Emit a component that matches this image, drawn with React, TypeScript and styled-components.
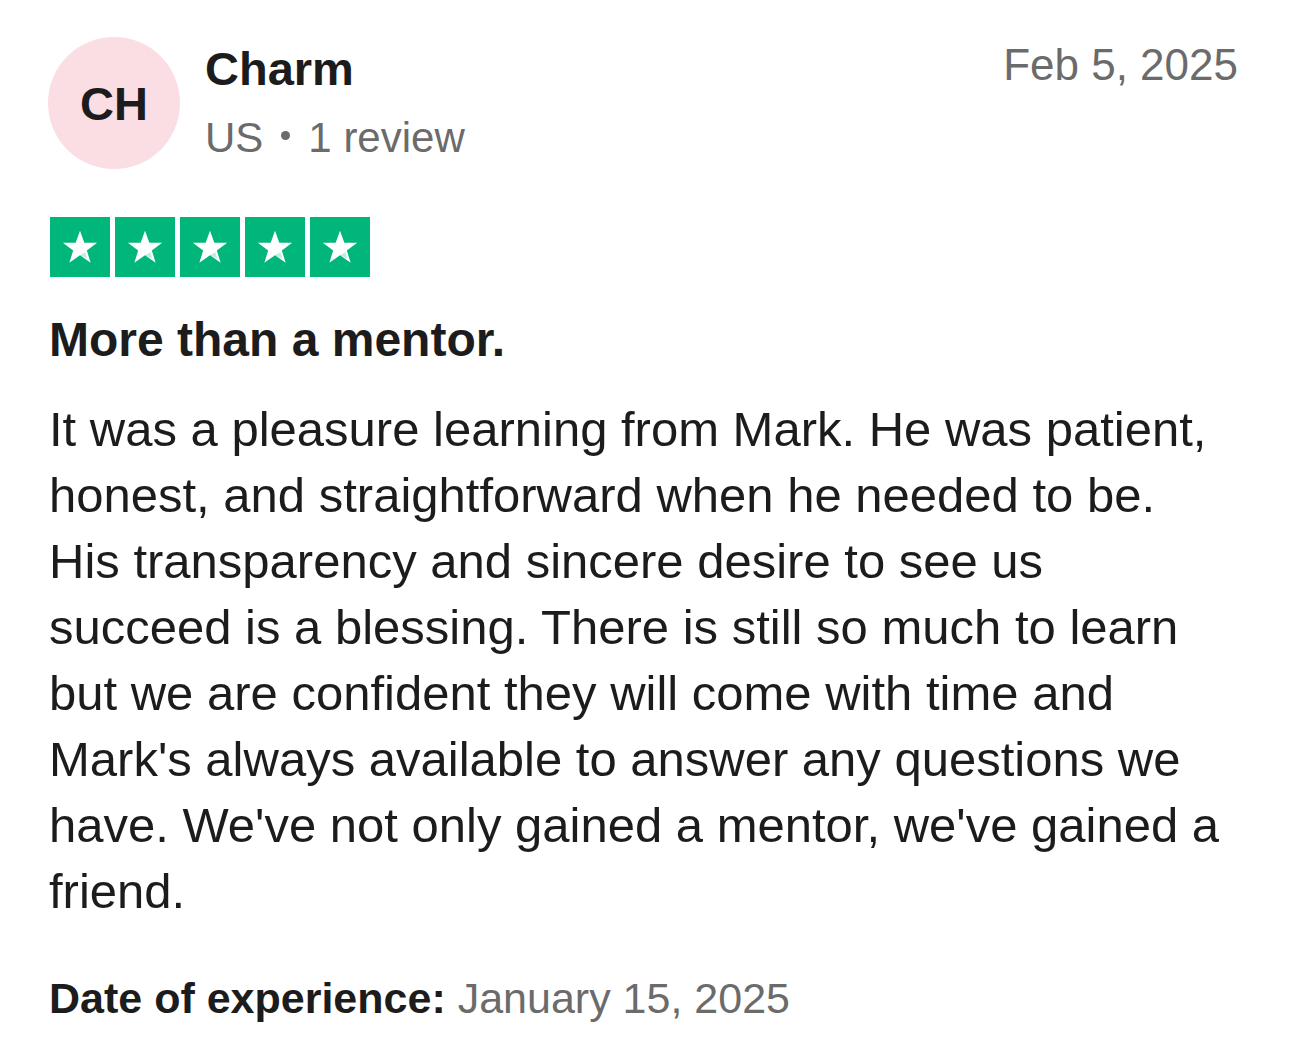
import styled, { createGlobalStyle } from 'styled-components';

const GlobalStyle = createGlobalStyle`
  body {
    margin: 0;
    background: #ffffff;
    font-family: 'Liberation Sans', Arial, Helvetica, sans-serif;
    color: #1c1c1c;
  }
`;

export default function App() {
  return (
    <>
      <GlobalStyle />
      <StyledReviewCard>
        <StyledHeader>
          <StyledConsumer>
            <StyledAvatar>CH</StyledAvatar>
            <StyledConsumerInfo>
              <span className="name">Charm</span>
              <span className="meta">
                US <StyledDot /> 1 review
              </span>
            </StyledConsumerInfo>
          </StyledConsumer>
          <StyledPostedDate>Feb 5, 2025</StyledPostedDate>
        </StyledHeader>

        <StyledStars aria-label="Rated 5 out of 5 stars">
          {[0, 1, 2, 3, 4].map((i) => (
            <StyledStarBox key={i}>
              <svg viewBox="0 0 24 24" width="40" height="40">
                <path
                  d="M12 2.2l2.6 7.3h7.7l-6.2 4.6 2.3 7.4L12 16.9l-6.4 4.6 2.3-7.4-6.2-4.6h7.7z"
                  fill="#ffffff"
                />
                <path d="M15.2 15.1l1.2 3.9L12 16.9z" fill="#00b67a" opacity="0.25" />
              </svg>
            </StyledStarBox>
          ))}
        </StyledStars>

        <StyledTitle>More than a mentor.</StyledTitle>
        <StyledBody>
          It was a pleasure learning from Mark. He was patient, honest, and
          straightforward when he needed to be. His transparency and sincere
          desire to see us succeed is a blessing. There is still so much to
          learn but we are confident they will come with time and Mark's always
          available to answer any questions we have. We've not only gained a
          mentor, we've gained a friend.
        </StyledBody>

        <StyledExperience>
          <strong>Date of experience:</strong> January 15, 2025
        </StyledExperience>
      </StyledReviewCard>
    </>
  );
}

const StyledReviewCard = styled.article`
  padding: 37px 52px 0 49px;
  width: 1290px;
  box-sizing: border-box;
`;

const StyledHeader = styled.header`
  display: flex;
  justify-content: space-between;
  align-items: flex-start;
`;

const StyledConsumer = styled.div`
  display: flex;
  align-items: center;
  gap: 25px;
`;

const StyledAvatar = styled.div`
  width: 132px;
  height: 132px;
  margin-left: -1px;
  border-radius: 50%;
  background: #fbdde4;
  display: flex;
  align-items: center;
  justify-content: center;
  font-size: 47px;
  font-weight: 700;
  color: #1c1c1c;
`;

const StyledConsumerInfo = styled.div`
  display: flex;
  flex-direction: column;
  gap: 16px;
  margin-top: -2px;

  span.name {
    font-size: 47px;
    font-weight: 700;
    line-height: 56px;
  }

  span.meta {
    font-size: 42px;
    line-height: 50px;
    color: #6b6b6b;
    display: flex;
    align-items: center;
    gap: 18px;
  }
`;

const StyledDot = styled.span`
  width: 9px;
  height: 9px;
  border-radius: 50%;
  background: #6b6b6b;
  margin-top: -6px;
`;

const StyledPostedDate = styled.time`
  font-size: 44px;
  line-height: 56px;
  color: #6b6b6b;
  margin-top: 0;
`;

const StyledStars = styled.div`
  display: flex;
  gap: 5px;
  margin-top: 48px;
  margin-left: 1px;
`;

const StyledStarBox = styled.span`
  width: 60px;
  height: 60px;
  background: #00b67a;
  display: flex;
  align-items: center;
  justify-content: center;
`;

const StyledTitle = styled.h2`
  margin: 35px 0 0;
  font-size: 48px;
  font-weight: 700;
  line-height: 56px;
`;

const StyledBody = styled.p`
  margin: 28px 0 0;
  font-size: 49px;
  line-height: 66px;
  max-width: 1200px;
`;

const StyledExperience = styled.p`
  margin: 46px 0 0;
  font-size: 43px;
  line-height: 56px;
  color: #6b6b6b;

  strong {
    color: #1c1c1c;
  }
`;
